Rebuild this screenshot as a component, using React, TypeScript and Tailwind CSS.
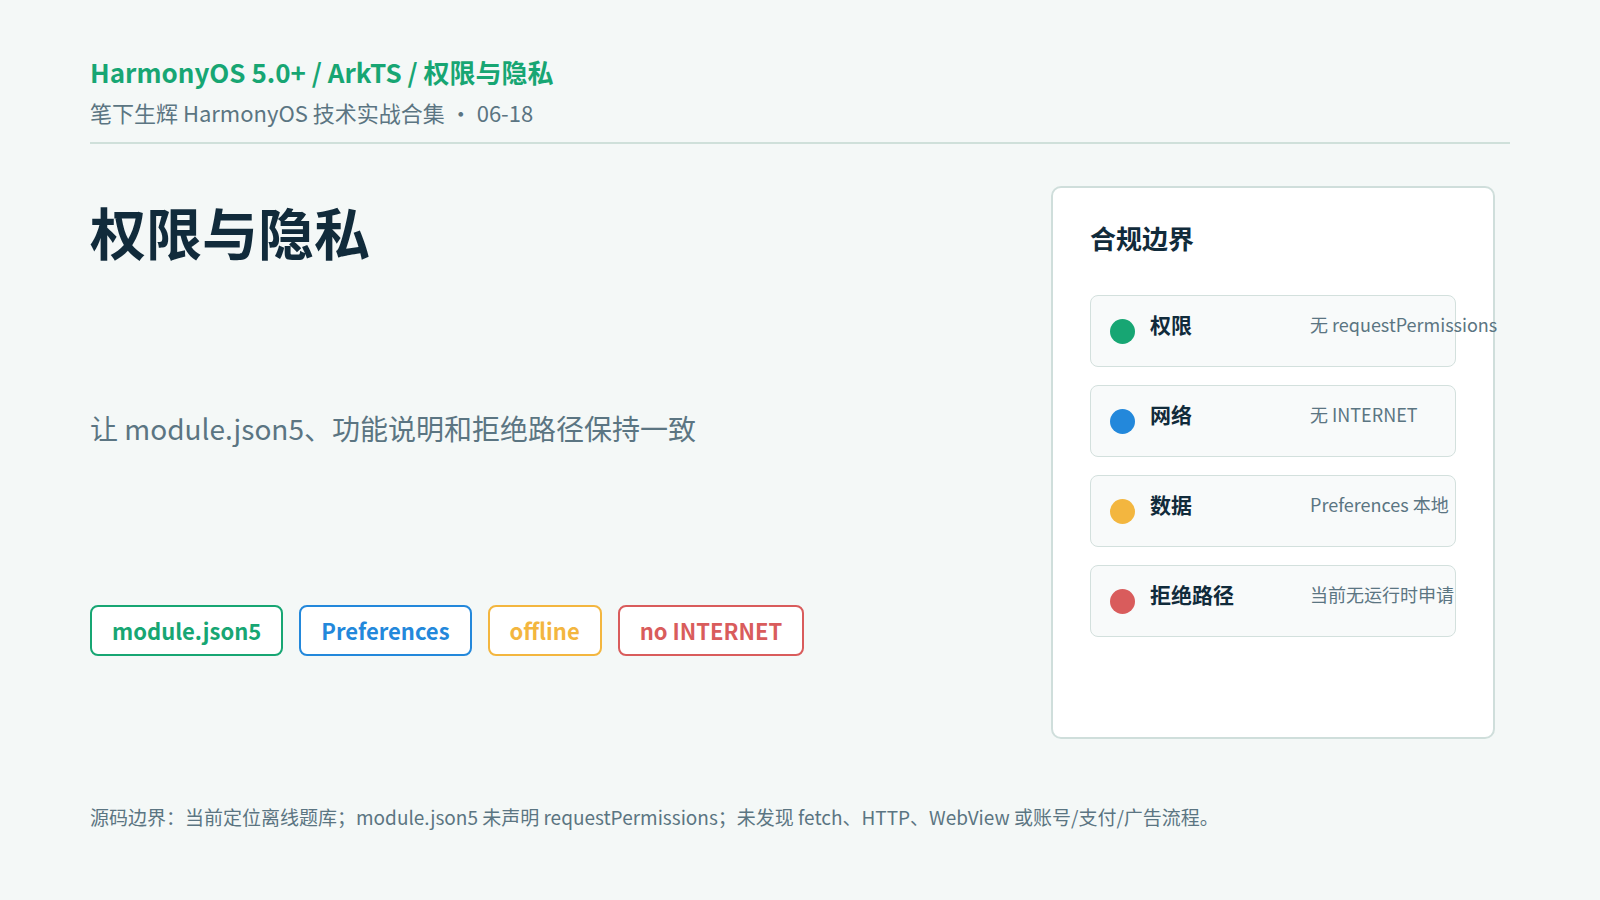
import React from 'react';

const tags = [
  { text: 'module.json5', cls: 'border-[#17a673] text-[#17a673]' },
  { text: 'Preferences', cls: 'border-[#2388db] text-[#2388db]' },
  { text: 'offline', cls: 'border-[#f3b63f] text-[#f3b63f]' },
  { text: 'no INTERNET', cls: 'border-[#d95c5c] text-[#d95c5c]' },
];

const rows = [
  { label: '权限', value: '无 requestPermissions', dot: 'bg-[#17a673]' },
  { label: '网络', value: '无 INTERNET', dot: 'bg-[#2388db]' },
  { label: '数据', value: 'Preferences 本地', dot: 'bg-[#f3b63f]' },
  { label: '拒绝路径', value: '当前无运行时申请', dot: 'bg-[#d95c5c]' },
];

const App: React.FC = () => {
  return (
    <div
      className="min-h-screen w-full bg-[#f4f8f7] px-[90px] pt-[55px] text-[#112b3b]"
      style={{ fontFamily: '"Noto Sans CJK SC", "Noto Sans", sans-serif' }}
    >
      {/* header */}
      <header className="border-b-2 border-[#cfe0da] pb-[14px]">
        <div className="text-[26px] font-bold leading-[34px] text-[#17a673]">
          HarmonyOS 5.0+ / ArkTS / 权限与隐私
        </div>
        <div className="mt-[8px] text-[22px] leading-[31px] text-[#5b7582]">
          笔下生辉 HarmonyOS 技术实战合集 · 06-18
        </div>
      </header>

      <main className="mt-[42px] flex justify-between">
        <section className="pt-[11px]">
          <h1 className="text-[56px] font-bold leading-[67px]">权限与隐私</h1>
          <p className="mt-[145px] text-[28px] leading-[39px] text-[#5b7582]">
            让 module.json5、功能说明和拒绝路径保持一致
          </p>
          <div className="mt-[157px] flex gap-4">
            {tags.map(t => (
              <span
                key={t.text}
                className={`flex h-[51px] items-center rounded-[8px] border-2 bg-white px-[20px] text-[22px] font-bold ${t.cls}`}
              >
                {t.text}
              </span>
            ))}
          </div>
        </section>

        <aside className="mr-[15px] h-[553px] w-[444px] rounded-[10px] border-2 border-[#cfdedb] bg-white px-[37px] pt-[33px]">
          <h2 className="text-[26px] font-bold leading-[34px]">合规边界</h2>
          <div className="mt-[40px] flex flex-col gap-[18px]">
            {rows.map(r => (
              <div
                key={r.label}
                className="flex h-[72px] items-start rounded-[8px] border border-[#d3e0dd] bg-[#f8fafa] pl-[19px] pt-[14px]"
              >
                <span className={`mt-[9px] mr-[15px] h-[25px] w-[25px] shrink-0 rounded-full ${r.dot}`} />
                <span className="mr-[15px] w-[145px] shrink-0 text-[21px] font-bold leading-[28px]">{r.label}</span>
                <span className="whitespace-nowrap text-[18px] leading-[28px] text-[#5b7582]">{r.value}</span>
              </div>
            ))}
          </div>
        </aside>
      </main>

      <footer className="mt-[64px] text-[19px] leading-[28px] text-[#5b7582]">
        源码边界：当前定位离线题库；module.json5 未声明 requestPermissions；未发现 fetch、HTTP、WebView 或账号/支付/广告流程。
      </footer>
    </div>
  );
};

export default App;
